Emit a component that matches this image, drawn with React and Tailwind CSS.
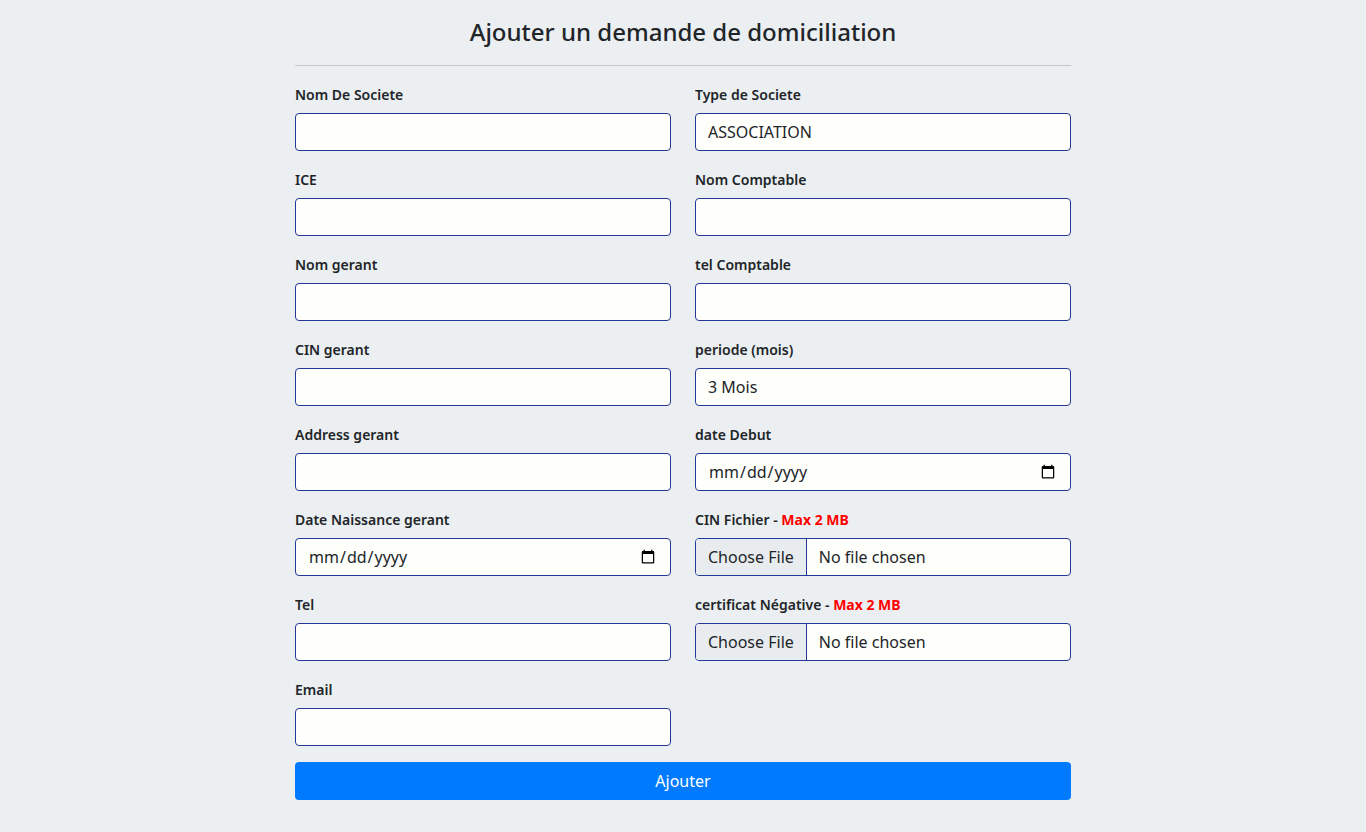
import { useState } from 'react';

const LEFT = [
  { id: 'nom', label: 'Nom De Societe' },
  { id: 'ice', label: 'ICE' },
  { id: 'gerant', label: 'Nom gerant' },
  { id: 'cin', label: 'CIN gerant' },
  { id: 'address', label: 'Address gerant' },
  { id: 'naissance', label: 'Date Naissance gerant', type: 'date' },
  { id: 'tel', label: 'Tel' },
  { id: 'email', label: 'Email', type: 'email' },
];

const RIGHT = [
  { id: 'type', label: 'Type de Societe', value: 'ASSOCIATION' },
  { id: 'comptable', label: 'Nom Comptable' },
  { id: 'telComptable', label: 'tel Comptable' },
  { id: 'periode', label: 'periode (mois)', value: '3 Mois' },
  { id: 'debut', label: 'date Debut', type: 'date' },
  { id: 'cinFile', label: 'CIN Fichier', type: 'file' },
  { id: 'certificat', label: 'certificat Négative', type: 'file' },
];

const inputCls =
  'block w-full h-[38px] rounded-[4px] border border-[#24389b] bg-[#fefffb] px-3 text-[16px] text-[#212529] outline-none';

const fileCls =
  'block w-full h-[38px] rounded-[4px] border border-[#24389b] bg-[#fefffb] text-[16px] text-[#212529] outline-none ' +
  'file:h-full file:mr-3 file:border-0 file:border-r file:border-solid file:border-[#24389b] file:bg-[#e9ecef] file:px-3 file:text-[16px] file:text-[#212529]';

function Field({ field }) {
  const [value, setValue] = useState(field.value ?? '');
  return (
    <div className="flex flex-col">
      <label htmlFor={field.id} className="mb-2 h-5 leading-5 text-[14px] font-semibold text-[#212529]">
        {field.label}
        {field.type === 'file' && (
          <>
            {' - '}
            <span className="font-bold text-[#ff0000]">Max 2 MB</span>
          </>
        )}
      </label>
      {field.type === 'file' ? (
        <input id={field.id} type="file" className={fileCls} />
      ) : (
        <input
          id={field.id}
          type={field.type ?? 'text'}
          value={value}
          onChange={e => setValue(e.target.value)}
          className={inputCls}
        />
      )}
    </div>
  );
}

export default function App() {
  return (
    <div
      className="min-h-screen bg-[#eceff1] pb-8"
      style={{ fontFamily: '"Noto Sans", "Open Sans", sans-serif' }}
    >
      <div className="mx-auto w-[776px] pt-[15px]">
        <h4 className="text-center text-[24px] font-medium leading-[34px] text-[#212529]">
          Ajouter un demande de domiciliation
        </h4>
        <hr className="mt-4 mb-[19px] border-t border-[#c4c6c8]" />

        <form onSubmit={e => e.preventDefault()}>
          <div className="grid grid-cols-2 gap-x-6">
            <div className="flex flex-col gap-[19px]">
              {LEFT.map(f => (
                <Field key={f.id} field={f} />
              ))}
            </div>
            <div className="flex flex-col gap-[19px]">
              {RIGHT.map(f => (
                <Field key={f.id} field={f} />
              ))}
            </div>
          </div>

          <button
            type="submit"
            className="mt-4 h-[38px] w-full rounded-[4px] bg-[#007bff] text-[16px] text-white"
          >
            Ajouter
          </button>
        </form>
      </div>
    </div>
  );
}
